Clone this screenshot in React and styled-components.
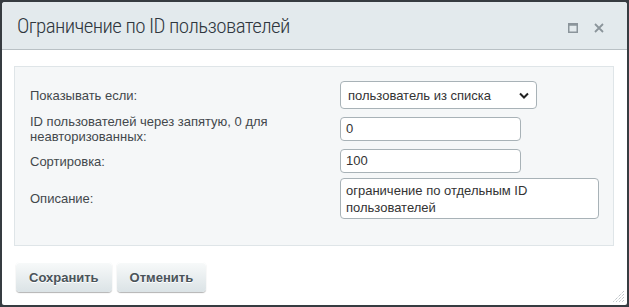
import React from 'react';
import styled, { createGlobalStyle } from 'styled-components';

const Global = createGlobalStyle`
  html, body { margin: 0; padding: 0; background: #363c41; }
  body { font-family: "Liberation Sans", Arial, sans-serif; }
`;

const Page = styled.div`
  width: 629px;
  height: 307px;
  padding: 2px 2px 2px 2px;
  box-sizing: border-box;
`;

const Dialog = styled.div`
  position: relative;
  width: 625px;
  height: 303px;
  background: #fff;
  border-radius: 3px 3px 2px 2px;
  display: flex;
  flex-direction: column;
  overflow: hidden;
`;

const Header = styled.div`
  height: 48px;
  background: #e3eaed;
  border-bottom: 1px solid #b9c1c5;
  display: flex;
  align-items: center;
  padding: 0 15px;
  box-sizing: border-box;
`;

const Title = styled.div`
  flex: 1;
  font-family: Roboto, "Liberation Sans", sans-serif;
  font-weight: 300;
  font-stretch: 75%;
  font-size: 21px;
  letter-spacing: -0.6px;
  color: #2f373e;
  padding-top: 1px;
`;

const Icons = styled.div`
  display: flex;
  align-items: center;
  gap: 16px;
  padding-right: 8px;
  padding-top: 4px;
`;

const Body = styled.div`
  flex: 1;
  padding: 16px 13px 0 12px;
  display: flex;
  flex-direction: column;
`;

const Panel = styled.div`
  background: #f5f7f8;
  border: 1px solid #dfe5e8;
  padding: 14px 15px 26px 15px;
  display: grid;
  grid-template-columns: 310px 1fr;
  row-gap: 5px;
  align-items: center;
`;

const Label = styled.div`
  font-size: 13px;
  line-height: 15px;
  color: #43484c;
  padding-right: 30px;
`;

const Field = styled.div`
  display: flex;
  align-items: center;
`;

const SelectBox = styled.div`
  width: 197px;
  height: 28px;
  box-sizing: border-box;
  border: 1px solid #a8b2b7;
  border-radius: 4px;
  background: #fff;
  display: flex;
  align-items: center;
  justify-content: space-between;
  padding: 0 7px 0 7px;
  font-size: 13px;
  color: #333;
`;

const TextInput = styled.div`
  width: ${p => p.$w}px;
  height: ${p => p.$h}px;
  box-sizing: border-box;
  border: 1px solid #a8b2b7;
  border-radius: 4px;
  background: #fff;
  font-size: 13px;
  line-height: ${p => (p.$multi ? '17px' : `${p.$h - 2}px`)};
  padding: ${p => (p.$multi ? '3px 5px' : '0 5px')};
  color: #333;
`;

const Footer = styled.div`
  display: flex;
  gap: 5px;
  padding: 16px 0 0 2px;
`;

const Button = styled.button`
  height: 30px;
  padding: 0 ${p => p.$px}px;
  border: none;
  border-radius: 4px;
  background: linear-gradient(#f8fafa, #dbe3e6);
  box-shadow: 0 1px 1px rgba(0, 0, 0, 0.3), inset 0 1px 0 #fff;
  font-family: "Liberation Sans", Arial, sans-serif;
  font-size: 13px;
  font-weight: bold;
  color: #4a5359;
  text-shadow: 0 1px #fff;
`;

const Grip = styled.svg`
  position: absolute;
  right: 2px;
  bottom: 2px;
`;

const App = () => (
  <Page>
    <Global />
    <Dialog>
      <Header>
        <Title>Ограничение по ID пользователей</Title>
        <Icons>
          <svg width="10" height="10" viewBox="0 0 10 10">
            <rect x="0.75" y="0.75" width="8.5" height="8.5" fill="none" stroke="#8b959b" strokeWidth="1.5" />
            <rect x="0.75" y="0.75" width="8.5" height="2" fill="#8b959b" />
          </svg>
          <svg width="10" height="10" viewBox="0 0 10 10">
            <path d="M1 1 L9 9 M9 1 L1 9" stroke="#8b959b" strokeWidth="1.8" />
          </svg>
        </Icons>
      </Header>
      <Body>
        <Panel>
          <Label>Показывать если:</Label>
          <Field>
            <SelectBox>
              <span>пользователь из списка</span>
              <svg width="10" height="7" viewBox="0 0 10 7">
                <path d="M1 1.5 L5 5.5 L9 1.5" fill="none" stroke="#222" strokeWidth="2" />
              </svg>
            </SelectBox>
          </Field>
          <Label>ID пользователей через запятую, 0 для неавторизованных:</Label>
          <Field>
            <TextInput $w={181} $h={24}>0</TextInput>
          </Field>
          <Label>Сортировка:</Label>
          <Field>
            <TextInput $w={181} $h={24}>100</TextInput>
          </Field>
          <Label>Описание:</Label>
          <Field>
            <TextInput $w={259} $h={41} $multi>
              ограничение по отдельным ID пользователей
            </TextInput>
          </Field>
        </Panel>
        <Footer>
          <Button $px={13}>Сохранить</Button>
          <Button $px={13}>Отменить</Button>
        </Footer>
      </Body>
      <Grip width="12" height="12" viewBox="0 0 12 12">
        <path d="M11 3 L3 11 M11 6 L6 11 M11 9 L9 11 M11 0 L0 11" stroke="#a5adb2" strokeWidth="1" strokeDasharray="1 1" />
      </Grip>
    </Dialog>
  </Page>
);

export default App;
